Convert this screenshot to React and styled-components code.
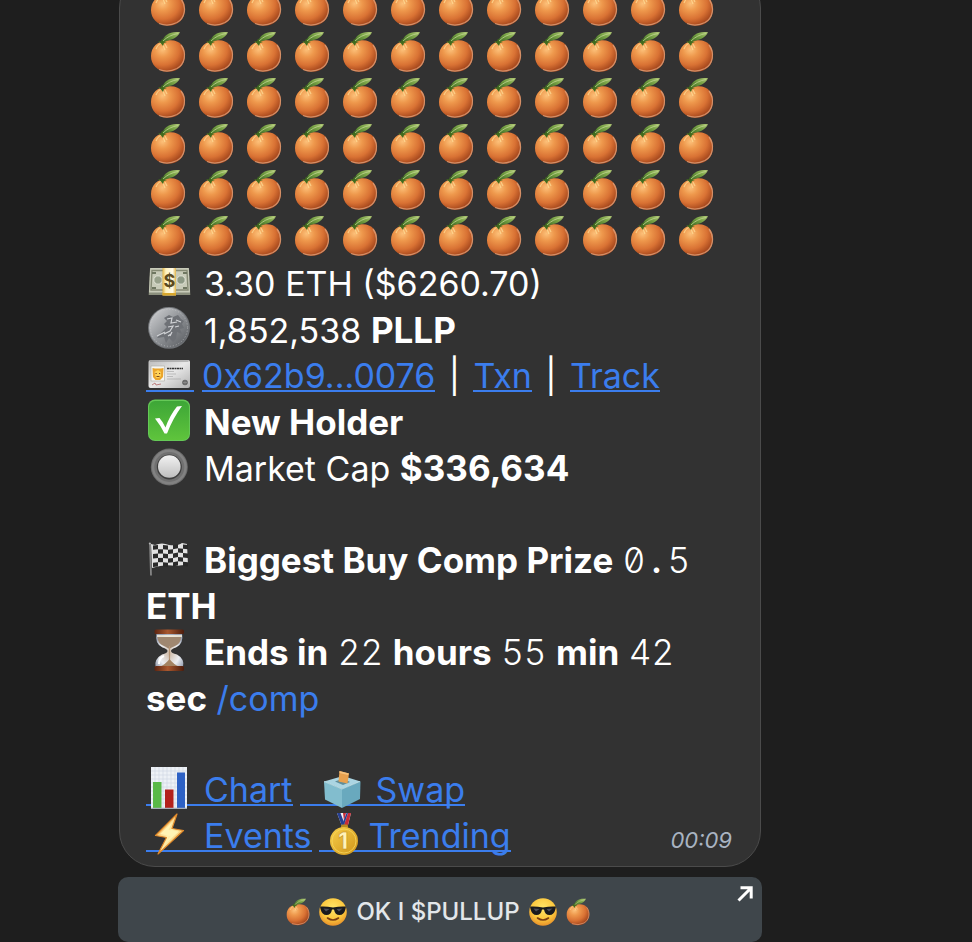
import styled, { createGlobalStyle } from "styled-components";

const ORANGE_ROWS = 6;
const ORANGES_PER_ROW = 12;

export default function App() {
  return (
    <>
      <GlobalStyle />
      <Gradients />
      <ChatPage>
        <Bubble>
          <OrangeGrid>
            {Array.from({ length: ORANGE_ROWS * ORANGES_PER_ROW }, (_, i) => (
              <Orange key={i} />
            ))}
          </OrangeGrid>
          <Line>
            <Money />
            3.30 ETH ($6260.70)
          </Line>
          <Line>
            <Coin />
            1,852,538 <b>PLLP</b>
          </Line>
          <Line>
            <TextLink href="#wallet" $end={8} aria-label="Wallet">
              <IdCard />
            </TextLink>
            <TextLink href="#address">0x62b9...0076</TextLink>
            <Divider>|</Divider>
            <TextLink href="#txn">Txn</TextLink>
            <Divider>|</Divider>
            <TextLink href="#track">Track</TextLink>
          </Line>
          <Line>
            <CheckMark />
            <b>New Holder</b>
          </Line>
          <Line>
            <RadioDot />
            Market Cap <b>$336,634</b>
          </Line>
          <Line />
          <Line>
            <Flag />
            <b>Biggest Buy Comp Prize</b>{" "}
            <Mono>
              0<Dot>.</Dot>5
            </Mono>
          </Line>
          <Line>
            <b>ETH</b>
          </Line>
          <Line>
            <Hourglass />
            <b>Ends in</b> <Mono>22</Mono> <b>hours</b> <Mono>55</Mono> <b>min</b> <Mono>42</Mono>
          </Line>
          <Line>
            <b>sec</b> <Command href="#comp">/comp</Command>
          </Line>
          <Line />
          <Line>
            <TextLink href="#chart" $end={7}>
              <BarChart />
              Chart
            </TextLink>
            <TextLink href="#swap" $lead={20}>
              <BallotBox />
              Swap
            </TextLink>
          </Line>
          <LastLine>
            <div>
              <TextLink href="#events" $end={7}>
                <Bolt />
                Events
              </TextLink>
              <TextLink href="#trending" $lead={2}>
                <Medal />
                Trending
              </TextLink>
            </div>
            <Time>00:09</Time>
          </LastLine>
        </Bubble>
        <ActionButton type="button">
          <Orange $small />
          <Sunglasses />
          <span>OK I $PULLUP</span>
          <Sunglasses />
          <Orange $small />
          <Corner viewBox="0 0 16 16">
            <path d="M1.500 14.500 L13.500 2.500 M3.500 1.800 H14.200 V12.500" />
          </Corner>
        </ActionButton>
      </ChatPage>
    </>
  );
}

// shared by every emoji below
function Gradients() {
  return (
    <svg width="0" height="0" display="block" aria-hidden="true">
      <defs>
        <radialGradient id="peel" cx="0.34" cy="0.3" r="0.75">
          <stop offset="0" stopColor="#fcc079" />
          <stop offset="0.3" stopColor="#ee984c" />
          <stop offset="0.65" stopColor="#d97234" />
          <stop offset="1" stopColor="#9c3f18" />
        </radialGradient>
        <linearGradient id="leaf" x1="0" y1="1" x2="1" y2="0">
          <stop offset="0" stopColor="#37661d" />
          <stop offset="0.6" stopColor="#7ba548" />
          <stop offset="1" stopColor="#b3c978" />
        </linearGradient>
        <linearGradient id="silver" x1="0" y1="0" x2="1" y2="1">
          <stop offset="0" stopColor="#d5d6d8" />
          <stop offset="0.5" stopColor="#8f9296" />
          <stop offset="1" stopColor="#55585c" />
        </linearGradient>
        <linearGradient id="band" x1="0" y1="0" x2="1" y2="0">
          <stop offset="0" stopColor="#e0b448" />
          <stop offset="0.25" stopColor="#fff3c0" />
          <stop offset="0.75" stopColor="#fffbe8" />
          <stop offset="1" stopColor="#e0b448" />
        </linearGradient>
        <linearGradient id="card" x1="0" y1="0" x2="1" y2="1">
          <stop offset="0" stopColor="#bcbcbc" />
          <stop offset="0.5" stopColor="#e8e8e8" />
          <stop offset="1" stopColor="#b0b0b0" />
        </linearGradient>
        <linearGradient id="green" x1="0" y1="0" x2="0" y2="1">
          <stop offset="0" stopColor="#3da637" />
          <stop offset="1" stopColor="#5fc43c" />
        </linearGradient>
        <linearGradient id="knob" x1="0" y1="0" x2="0" y2="1">
          <stop offset="0" stopColor="#f2f2f2" />
          <stop offset="1" stopColor="#bfbfbf" />
        </linearGradient>
        <linearGradient id="wood" x1="0" y1="0" x2="1" y2="0">
          <stop offset="0" stopColor="#5a2411" />
          <stop offset="0.45" stopColor="#a9582f" />
          <stop offset="1" stopColor="#4b1c0c" />
        </linearGradient>
        <radialGradient id="glass" cx="0.5" cy="0.6" r="0.6">
          <stop offset="0" stopColor="#cdb9a6" />
          <stop offset="0.6" stopColor="#eceef2" />
          <stop offset="1" stopColor="#9ba3b4" />
        </radialGradient>
        <linearGradient id="bolt" x1="0" y1="0" x2="1" y2="1">
          <stop offset="0" stopColor="#f08a1c" />
          <stop offset="0.5" stopColor="#fff3b0" />
          <stop offset="1" stopColor="#ef9423" />
        </linearGradient>
        <linearGradient id="gold" x1="0" y1="0" x2="1" y2="1">
          <stop offset="0" stopColor="#f7cf4b" />
          <stop offset="1" stopColor="#cf9418" />
        </linearGradient>
        <radialGradient id="face" cx="0.5" cy="0.35" r="0.65">
          <stop offset="0" stopColor="#ffe568" />
          <stop offset="0.65" stopColor="#fbc63c" />
          <stop offset="1" stopColor="#e8912a" />
        </radialGradient>
      </defs>
    </svg>
  );
}

function Orange({ $small }) {
  const Frame = $small ? SmallEmoji : Emoji;
  return (
    <Frame viewBox={$small ? "3 0 36 42" : "-1 0 48 46"} $width={24}>
      <path
        d="M20 9.5 C32 7.6 38.4 15 38 24.500 C37.600 35 30.500 41 20.500 40.800 C10.500 40.600 3.800 33.600 4 25 C4.200 15.500 10.500 10.500 20 9.500 Z"
        fill="url(#peel)"
      />
      <path d="M34 14 C40 22 38 33 30 37.500 Q21 42 12 38.500" fill="none" stroke="#e0a079" strokeWidth="1.300" opacity="0.8" />
      <path d="M9 18 Q11 13 15 12 M18 19 L16 14 M20 17 L18 13" fill="none" stroke="#ffdf9a" strokeWidth="1.200" opacity="0.7" />
      <path d="M11 10 L14 10.500 L15 7.500 L17 10 L20 11 L17 12 L16 15 L14 12.500 Z" fill="#416b1e" />
      <path d="M15 11 C17 4 23 0 33 1.300 C30 7.500 23 9.800 16 10.500 Z" fill="url(#leaf)" />
      <path d="M16 10 Q22 4 31 2.500" fill="none" stroke="#c1d592" strokeWidth="0.8" />
    </Frame>
  );
}

function Money() {
  return (
    <Emoji viewBox="-1 0 48 46" $gap={10}>
      <path d="M3 7.500 H42 L43.300 34 H1.700 Z" fill="#8b8f7d" />
      <path d="M3.200 7 H41.800 L43 31.500 H2 Z" fill="#c8cbb9" />
      <path d="M5 9.500 H40 L41 29 H4 Z" fill="none" stroke="#868b75" strokeWidth="1.400" />
      <circle cx="11" cy="19" r="4.200" fill="#98a18b" stroke="#e1e3d6" />
      <circle cx="34" cy="19" r="4.200" fill="#8d9985" stroke="#e1e3d6" />
      <path d="M5 12 H9 M36 12 H40 M5 27 H9 M36 27 H40" stroke="#6f7761" strokeWidth="1.800" />
      <path d="M15.500 7 H29 V34.500 H15.500 Z" fill="url(#band)" />
      <path d="M15.500 32 H29 V34.500 H15.500 Z" fill="#d9a72c" />
      <text x="22.500" y="26" textAnchor="middle" fontSize="18" fontWeight="700" fill="#5c4a20">
        $
      </text>
    </Emoji>
  );
}

function Coin() {
  return (
    <Emoji viewBox="-1 0 48 46" $gap={10}>
      <circle cx="22" cy="20.800" r="21" fill="#6f7276" />
      <circle cx="22" cy="20.800" r="20" fill="url(#silver)" />
      <circle cx="22" cy="20.800" r="18.500" fill="none" stroke="#c9cbcd" strokeWidth="0.6" strokeDasharray="1 2" />
      <path
        d="M17 11 L22 8 L26 10 L31 8 L34 12 L37 14 L35 17 L37 21 L33 22 L35 27 L30 25 L29 32 L26 35 L22 31 L19 36 L17 30 L10 31 L14 26 L17 23 L20 20 L17 17 L20 14 Z"
        fill="#6e7176"
      />
      <path d="M20 12 L25 11 L24 16 L30 15 M21 20 L26 19 L23 24 L17 27 M10 29 L18 25 M25 25 L23 29 M29 13 L34 15 M28 20 L32 19 M21 29 L24 27" fill="none" stroke="#d2d4d7" strokeWidth="1.200" />
    </Emoji>
  );
}

function IdCard() {
  return (
    <Emoji viewBox="-1 0 48 46">
      <rect x="1.500" y="7" width="41.500" height="28" rx="2" fill="url(#card)" />
      <path d="M3 8 H41.500" stroke="#8a8a8a" />
      <rect x="4" y="13" width="13.500" height="15" fill="#f5f5f1" stroke="#a8a8a0" strokeWidth="0.6" />
      <path d="M5.500 15 L8 15.500 H14 L16.500 15 L16 24 L13 27 H8.500 L6 24 Z" fill="#eba52b" />
      <path d="M7.500 19 L11 17 L14 19 V23 L12 25 H9 Z" fill="#ffd156" />
      <path d="M8.500 20.500 H9.700 M12 20.500 H13.200 M9.500 23.500 H12.500" stroke="#7a481b" strokeWidth="1" />
      <path d="M20 15.500 H36" stroke="#333" strokeWidth="1.600" strokeDasharray="2 0.5" />
      <path d="M20 18.500 H27 M20 21 H29 M20 23.500 H26 M20 26 H34" stroke="#aaa" strokeWidth="0.7" />
      <path d="M5 32 L8 30 L9 32 L14 31" fill="none" stroke="#b87474" strokeWidth="0.9" />
      <circle cx="38" cy="29.500" r="2.800" fill="#666" />
      <path d="M36 29.500 H40 M38 27.500 V31.500" stroke="#999" strokeWidth="0.6" />
    </Emoji>
  );
}

function CheckMark() {
  return (
    <Emoji viewBox="-1 0 48 46" $gap={10}>
      <rect x="1" y="0.500" width="42" height="41.500" rx="7" fill="#65c957" />
      <rect x="2" y="2" width="40" height="39" rx="6" fill="url(#green)" />
      <path d="M8 19.500 L12.500 19 Q16 23 18.500 28.500 Q23 16 30 7.500 L35 7 Q26 19 20 34.500 L17.500 34.500 Q14 27 8 19.500 Z" fill="#fff" />
    </Emoji>
  );
}

function RadioDot() {
  return (
    <Emoji viewBox="-1 0 48 46" $gap={10}>
      <circle cx="22.300" cy="22" r="18.500" fill="#6c6c6c" />
      <circle cx="22.300" cy="22" r="17.500" fill="#828282" />
      <circle cx="22.300" cy="22" r="15" fill="#707070" />
      <circle cx="22.300" cy="22" r="12.500" fill="#3f3f3f" />
      <circle cx="22.300" cy="21.500" r="11.300" fill="url(#knob)" />
    </Emoji>
  );
}

function Flag() {
  const columns = [6, 11, 16, 21, 26, 31, 36];
  const rows = [0, 1, 2, 3, 4];
  const wave = [1.5, 1, 1, 1.5, 1, 0, 0.5, 1];
  return (
    <Emoji viewBox="-1 0 48 46" $gap={10}>
      <path d="M4 7 L8 8 Q15 5 22 8 Q31 9 35 6 L40 7 L41 28 Q34 28 29 29 Q17 27 5 31 Z" fill="#e2e2e2" />
      {columns.map((x, c) =>
        rows.map((r) =>
          (c + r) % 2 === 0 ? (
            <path
              key={`${c}-${r}`}
              d={`M${x} ${7 + wave[c] + r * 4.3} L${x + 5} ${7 + wave[c + 1] + r * 4.3} v4.3 L${x} ${11.3 + wave[c] + r * 4.3} Z`}
              fill="#2a2a2a"
            />
          ) : null
        )
      )}
      <path d="M3 6 L4 38.500" stroke="#858585" strokeWidth="1.800" />
      <circle cx="2.800" cy="6.500" r="1" fill="#b5b5b5" />
    </Emoji>
  );
}

function Hourglass() {
  return (
    <Emoji viewBox="-1 0 48 46" $gap={10}>
      <path d="M9.500 4 H35 Q37 15 29 18.500 Q24 20 24 22 Q24 24 30 25.500 Q38 30 36 38 H8.500 Q7 30 15 25.500 Q20.500 24 20.500 22 Q20.500 20 15.500 18.500 Q7.500 15 9.500 4 Z" fill="url(#glass)" />
      <path d="M10.500 8 H34 Q34 15 27 17.500 Q23 19 22.500 20 Q21 19 18 17.500 Q10.500 15 10.500 8 Z" fill="#9f8770" />
      <path d="M10 7 H35" stroke="#fff5dc" strokeWidth="1.500" />
      <path d="M22.500 17 V34" stroke="#b69474" strokeWidth="1.200" />
      <path d="M22.500 30 Q26 35 33 38 H12 Q19 35 22.500 30 Z" fill="#a48362" />
      <path d="M12 35 Q12 29 17 27" fill="none" stroke="#fff" strokeWidth="2" />
      <rect x="7.500" y="0.500" width="29.500" height="4.500" rx="1.500" fill="url(#wood)" />
      <rect x="7.500" y="37" width="29.500" height="5" rx="1.500" fill="url(#wood)" />
    </Emoji>
  );
}

function BarChart() {
  return (
    <Emoji viewBox="-1 0 48 46" $gap={10}>
      <rect x="4" y="0" width="36" height="42" fill="#edf1f6" />
      <path
        d="M4 4 H40 M4 8 H40 M4 12 H40 M4 16 H40 M4 20 H40 M4 24 H40 M4 28 H40 M4 32 H40 M4 36 H40 M8 0 V42 M12 0 V42 M16 0 V42 M20 0 V42 M24 0 V42 M28 0 V42 M32 0 V42 M36 0 V42"
        stroke="#cdd5e2"
        strokeWidth="0.6"
      />
      <rect x="6" y="15" width="8.500" height="26" fill="#59b947" />
      <rect x="18" y="22.500" width="8.500" height="18.500" fill="#b3211c" />
      <rect x="30" y="5.500" width="8" height="35.500" fill="#2d61c5" />
      <path d="M4 41.300 H40" stroke="#a5adb8" strokeWidth="1.300" />
    </Emoji>
  );
}

function BallotBox() {
  return (
    <Emoji viewBox="-1 0 48 46" $gap={8}>
      <path d="M22 9 L39.500 14.500 L21 22 L3 14.500 Z" fill="#abd5e2" />
      <path d="M3 14.500 L21 22 V41 L4 32.500 Z" fill="#82bdce" />
      <path d="M39.500 14.500 L21 22 V41 L39 32 Z" fill="#69a9be" />
      <path d="M3 14.500 L21 22 L39 14.500" fill="none" stroke="#c0e2ea" strokeWidth="0.8" />
      <path d="M14 14.500 L22 11.500 L29 15 L22 18 Z" fill="#608d9a" />
      <path d="M18.500 4 L28 6.500 L26.500 16.500 L17.500 14.500 Z" fill="#e8a14e" />
      <path d="M18.500 4 L28 6.500 L27 8 L18.500 6 Z" fill="#f5c17c" />
    </Emoji>
  );
}

function Bolt() {
  return (
    <Emoji viewBox="-1 0 48 46" $gap={10}>
      <path d="M30 1 L8.500 22.500 L19.500 24.500 L11 41 L36.500 17.500 L25 15.500 Z" fill="url(#bolt)" stroke="#e0892a" strokeWidth="1.200" strokeLinejoin="round" />
      <path d="M26 8 L13 21 L23.500 23 L18 31 L32 18.500 L21.500 17 Z" fill="#fff4b4" />
    </Emoji>
  );
}

function Medal() {
  return (
    <Emoji viewBox="-1 0 48 46">
      <path d="M15 0 H29 L26 12 H19.500 Z" fill="#f2f2f5" />
      <path d="M15 0 H18.500 L23 12 H19.500 Z" fill="#273f91" />
      <path d="M21 0 H24 L22 8 Z" fill="#c72b37" />
      <path d="M26 0 H29 L26 12 H22 Z" fill="#c72b37" />
      <path d="M24.500 0 H26 L22 12 H20 Z" fill="#273f91" />
      <rect x="19" y="11.500" width="7" height="4" rx="1.500" fill="#b88b21" />
      <circle cx="22" cy="28" r="14" fill="url(#gold)" />
      <circle cx="22" cy="28" r="12" fill="none" stroke="#f6d75d" strokeWidth="0.8" />
      <text x="21" y="36" textAnchor="middle" fontSize="23" fontWeight="800" fill="#fff3b8" stroke="#c08b1a" strokeWidth="0.6">
        1
      </text>
    </Emoji>
  );
}

function Sunglasses() {
  return (
    <SmallEmoji viewBox="0 0 28 28" $width={28}>
      <circle cx="14" cy="14" r="13.800" fill="url(#face)" />
      <path d="M1 8.500 Q7 8 14 9.500 Q21 8 27 8.500 L26.500 11 Q25 17 20.500 17 Q16 17 15 11.500 H13 Q12 17 7.500 17 Q3 17 1.500 11 Z" fill="#191a1e" />
      <path d="M4.500 10.500 L10.500 11 L7 13.500 Z M17.500 11 L23.500 10.500 L20 13.500 Z" fill="#4b4e59" />
      <path d="M8.500 20 Q14 24 19.500 20" fill="none" stroke="#7b3e11" strokeWidth="1.600" strokeLinecap="round" />
    </SmallEmoji>
  );
}

const GlobalStyle = createGlobalStyle`
  * {
    box-sizing: border-box;
  }
  body {
    margin: 0;
    background-color: #1e1e1e;
    font-family: Inter, "Liberation Sans", sans-serif;
  }
`;
// newest message sticks to the bottom, older content runs off the top
const ChatPage = styled.main`
  height: 100vh;
  overflow: hidden;
  display: flex;
  flex-direction: column;
  justify-content: flex-end;
  gap: 10px;
  padding: 0 210px 0 118px;
`;
const Bubble = styled.section`
  flex-shrink: 0;
  margin: 0 1px;
  padding: 12px 28px 7px 26px;
  border: 1px solid #4b4b4b;
  border-radius: 36px;
  background-color: #323232;
  color: #ffffff;
  font-size: 34px;
  line-height: 46px;
  white-space: nowrap;

  b {
    font-size: 35px;
    font-weight: 700;
  }
`;
const OrangeGrid = styled.div`
  display: grid;
  grid-template-columns: repeat(12, 48px);
`;
const Line = styled.div`
  height: 46px;
`;
const LastLine = styled(Line)`
  display: flex;
  justify-content: space-between;
`;
const Emoji = styled.svg`
  display: inline-block;
  vertical-align: top;
  width: 48px;
  height: 46px;
  margin-right: ${(props) => props.$gap || 0}px;
`;
const SmallEmoji = styled.svg`
  width: ${(props) => props.$width}px;
  height: 28px;
`;
const TextLink = styled.a`
  display: inline-block;
  vertical-align: top;
  height: 46px;
  padding-left: ${(props) => props.$lead || 0}px;
  margin-right: ${(props) => props.$end || 0}px;
  color: #3b7ded;
  text-decoration: none;
  background: linear-gradient(#3b7ded, #3b7ded) no-repeat 0 37px / 100% 2px;
`;
const Command = styled.a`
  color: #3b7ded;
  text-decoration: none;
`;
const Divider = styled.span`
  display: inline-block;
  width: 38px;
  text-align: center;
`;
const Mono = styled.span`
  font-size: 35px;
  font-weight: 300;
  font-feature-settings: "tnum", "zero";
`;
const Dot = styled.span`
  display: inline-block;
  width: 22px;
  font-weight: 600;
  text-align: center;
`;
const Time = styled.time`
  color: #a9b4c2;
  font-size: 22px;
  font-style: italic;
  line-height: 54px;
`;
const ActionButton = styled.button`
  position: relative;
  flex-shrink: 0;
  display: flex;
  align-items: center;
  justify-content: center;
  gap: 9px;
  height: 65px;
  padding: 4px 4px 0 0;
  border: none;
  border-radius: 10px;
  background-color: #3f464b;
  color: #e3e7ea;
  font-family: inherit;
  font-size: 24px;
  font-weight: 500;
`;
const Corner = styled.svg`
  position: absolute;
  top: 9px;
  right: 9px;
  width: 16px;
  height: 16px;
  fill: none;
  stroke: #ffffff;
  stroke-width: 3;
`;
